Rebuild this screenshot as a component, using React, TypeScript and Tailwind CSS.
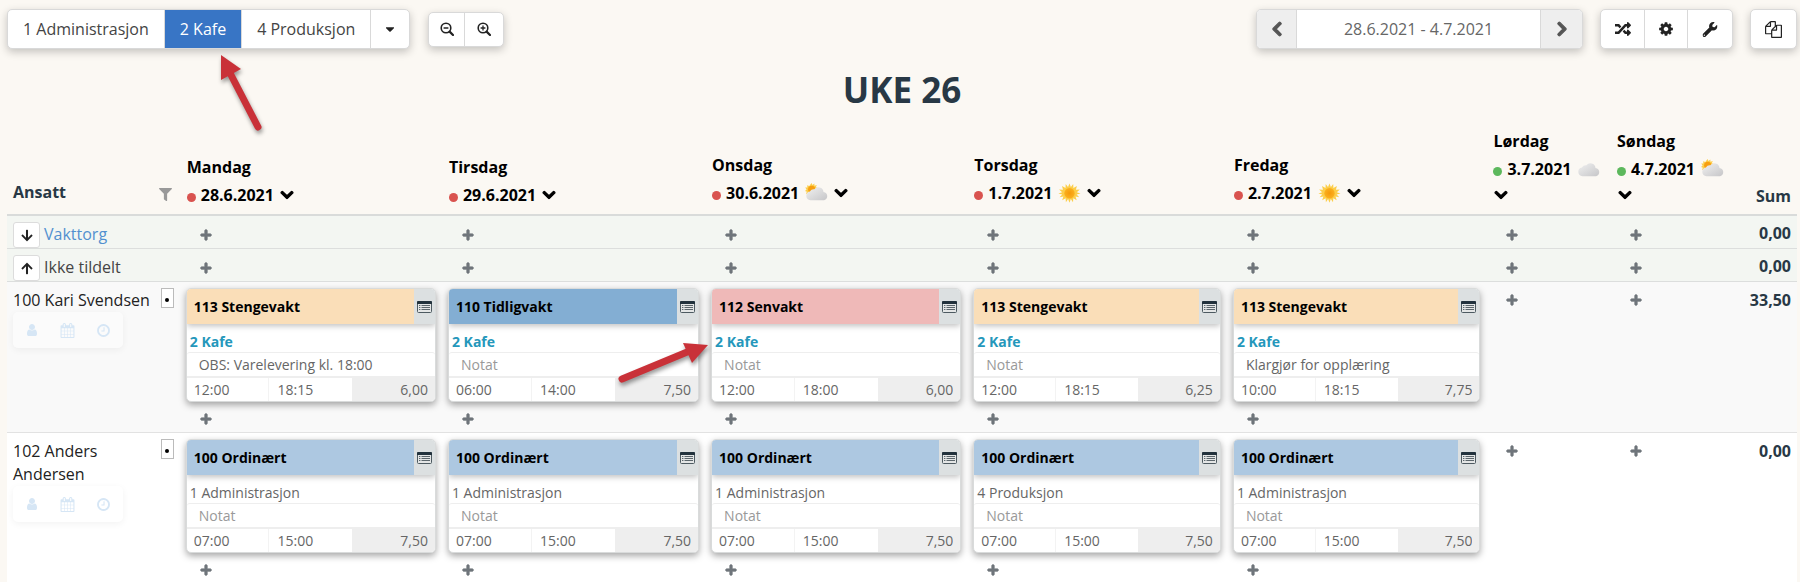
import { ReactNode } from "react";
import { FaCaretDown, FaChevronDown, FaChevronLeft, FaChevronRight, FaFilter, FaPlus, FaRandom, FaWrench, FaArrowDown, FaArrowUp } from "react-icons/fa";

interface Shift {
    title: string;
    color: string;
    dept: string;
    note?: string;
    from: string;
    to: string;
    sum: string;
}

interface Employee {
    name: string;
    sum: string;
    shifts: Shift[];
}

interface Day {
    name: string;
    date: string;
    red: boolean;
    weather?: "sun" | "cloud" | "partly";
    narrow?: boolean;
}

const days: Day[] = [
    { name: "Mandag", date: "28.6.2021", red: true },
    { name: "Tirsdag", date: "29.6.2021", red: true },
    { name: "Onsdag", date: "30.6.2021", red: true, weather: "partly" },
    { name: "Torsdag", date: "1.7.2021", red: true, weather: "sun" },
    { name: "Fredag", date: "2.7.2021", red: true, weather: "sun" },
    { name: "Lørdag", date: "3.7.2021", red: false, weather: "cloud", narrow: true },
    { name: "Søndag", date: "4.7.2021", red: false, weather: "partly", narrow: true },
];

const peach = "bg-[#fadeb8]";
const blue = "bg-[#83aed3]";
const pink = "bg-[#efb9b8]";
const lightBlue = "bg-[#adc8e1]";

const ordinary = (dept: string): Shift => ({ title: "100 Ordinært", color: lightBlue, dept, from: "07:00", to: "15:00", sum: "7,50" });

const employees: Employee[] = [
    {
        name: "100 Kari Svendsen",
        sum: "33,50",
        shifts: [
            { title: "113 Stengevakt", color: peach, dept: "2 Kafe", note: "OBS: Varelevering kl. 18:00", from: "12:00", to: "18:15", sum: "6,00" },
            { title: "110 Tidligvakt", color: blue, dept: "2 Kafe", from: "06:00", to: "14:00", sum: "7,50" },
            { title: "112 Senvakt", color: pink, dept: "2 Kafe", from: "12:00", to: "18:00", sum: "6,00" },
            { title: "113 Stengevakt", color: peach, dept: "2 Kafe", from: "12:00", to: "18:15", sum: "6,25" },
            { title: "113 Stengevakt", color: peach, dept: "2 Kafe", note: "Klargjør for opplæring", from: "10:00", to: "18:15", sum: "7,75" },
        ],
    },
    {
        name: "102 Anders Andersen",
        sum: "0,00",
        shifts: [
            ordinary("1 Administrasjon"),
            ordinary("1 Administrasjon"),
            ordinary("1 Administrasjon"),
            ordinary("4 Produksjon"),
            ordinary("1 Administrasjon"),
        ],
    },
];

const paths = {
    copy: "M1696 384q40 0 68 28t28 68v1216q0 40-28 68t-68 28h-960q-40 0-68-28t-28-68v-288h-544q-40 0-68-28t-28-68v-672q0-40 20-88t48-76l408-408q28-28 76-48t88-20h416q40 0 68 28t28 68v328q68-40 128-40h416zm-544 213l-299 299h299v-299zm-640-384l-299 299h299v-299zm196 647l316-316v-416h-384v416q0 40-28 68t-68 28h-416v640h512v-256q0-40 20-88t48-76zm956 804v-1152h-384v416q0 40-28 68t-68 28h-416v640h896z",
    clock: "M1024 544v448q0 14-9 23t-23 9h-320q-14 0-23-9t-9-23v-64q0-14 9-23t23-9h224v-352q0-14 9-23t23-9h64q14 0 23 9t9 23zm416 352q0-148-73-273t-198-198-273-73-273 73-198 198-73 273 73 273 198 198 273 73 273-73 198-198 73-273zm224 0q0 209-103 385.5t-279.5 279.5-385.5 103-385.5-103-279.5-279.5-103-385.5 103-385.5 279.5-279.5 385.5-103 385.5 103 279.5 279.5 103 385.5z",
    calendar: "M192 1664h288v-288h-288v288zm352 0h320v-288h-320v288zm-352-352h288v-320h-288v320zm352 0h320v-320h-320v320zm-352-384h288v-288h-288v288zm736 736h320v-288h-320v288zm-384-736h320v-288h-320v288zm768 736h288v-288h-288v288zm-384-352h320v-320h-320v320zm-352-864v-288q0-13-9.5-22.5t-22.5-9.5h-64q-13 0-22.5 9.5t-9.5 22.5v288q0 13 9.5 22.5t22.5 9.5h64q13 0 22.5-9.5t9.5-22.5zm736 864h288v-320h-288v320zm-384-384h320v-288h-320v288zm384 0h288v-288h-288v288zm32-480v-288q0-13-9.5-22.5t-22.5-9.5h-64q-13 0-22.5 9.5t-9.5 22.5v288q0 13 9.5 22.5t22.5 9.5h64q13 0 22.5-9.5t9.5-22.5zm384-64v1280q0 52-38 90t-90 38h-1408q-52 0-90-38t-38-90v-1280q0-52 38-90t90-38h128v-96q0-66 47-113t113-47h64q66 0 113 47t47 113v96h384v-96q0-66 47-113t113-47h64q66 0 113 47t47 113v96h128q52 0 90 38t38 90z",
    user: "M1536 1399q0 109-62.5 187t-150.5 78h-854q-88 0-150.5-78t-62.5-187q0-85 8.5-160.5t31.5-152 58.5-131 94-89 134.5-34.5q131 128 313 128t313-128q76 0 134.5 34.5t94 89 58.5 131 31.5 152 8.5 160.5zm-256-887q0 159-112.5 271.5t-271.5 112.5-271.5-112.5-112.5-271.5 112.5-271.5 271.5-112.5 271.5 112.5 112.5 271.5z",
    cog: "M1152 896q0-106-75-181t-181-75-181 75-75 181 75 181 181 75 181-75 75-181zm512-109v222q0 12-8 23t-20 13l-185 28q-19 54-39 91 35 50 107 138 10 12 10 25t-9 23q-27 37-99 108t-94 71q-12 0-26-9l-138-108q-44 23-91 38-16 136-29 186-7 28-36 28h-222q-14 0-24.5-8.5t-11.5-21.5l-28-184q-49-16-90-37l-141 107q-10 9-25 9-14 0-25-11-126-114-165-168-7-10-7-23 0-12 8-23 15-21 51-66.5t54-70.5q-27-50-41-99l-183-27q-13-2-21-12.5t-8-23.5v-222q0-12 8-23t19-13l186-28q14-46 39-92-40-57-107-138-10-12-10-24 0-10 9-23 26-36 98.5-107.5t94.5-71.5q13 0 26 10l138 107q44-23 91-38 16-136 29-186 7-28 36-28h222q14 0 24.5 8.5t11.5 21.5l28 184q49 16 90 37l142-107q9-9 24-9 13 0 25 10 129 119 165 170 7 8 7 22 0 12-8 23-15 21-51 66.5t-54 70.5q26 50 41 98l183 28q13 2 21 12.5t8 23.5z",
};

const Icon = ({ d, className }: { d: string; className: string }) => (
    <svg viewBox="0 0 1792 1792" fill="currentColor" className={className}>
        <path d={d} />
    </svg>
);

const ZoomIcon = ({ plus }: { plus?: boolean }) => (
    <svg viewBox="0 0 14 14" fill="none" stroke="currentColor" className="h-[14px] w-[14px]">
        <circle cx="6" cy="6" r="4.8" strokeWidth="1.6" />
        <path d="M9.6 9.6l3.4 3.4" strokeWidth="2.2" strokeLinecap="round" />
        <path d={plus ? "M3.6 6h4.8M6 3.6v4.8" : "M3.6 6h4.8"} strokeWidth="1.3" />
    </svg>
);

const CardIcon = () => (
    <svg viewBox="0 0 15 12" className="h-3 w-[15px]">
        <rect x="0.5" y="0.5" width="14" height="11" rx="1" fill="#e4e6e6" stroke="#4d5a61" />
        <path d="M0 1q0-1 1-1h13q1 0 1 1v2H0z" fill="#22323d" />
        <path d="M2 4.5h1.4M2 6.5h1.4M2 8.5h1.4M4.5 4.5h8.5M4.5 6.5h8.5M4.5 8.5h8.5" stroke="#5b666c" />
    </svg>
);

const cloudPath = "M5 19.5a4.5 4.5 0 0 1-.6-8.9 4.6 4.6 0 0 1 4.4-2.1 5.2 5.2 0 0 1 9.2 2.6 4.3 4.3 0 0 1 .6 8.4z";

const Weather = ({ kind }: { kind: "sun" | "cloud" | "partly" }) => (
    <svg viewBox="0 0 23 22" className="h-[22px] w-[23px] shrink-0">
        <defs>
            <linearGradient id="cloud" x1="0" y1="0" x2="1" y2="1">
                <stop offset="0" stopColor="#f0f0f0" />
                <stop offset="1" stopColor="#c6c6c8" />
            </linearGradient>
            <radialGradient id="sun">
                <stop offset="0" stopColor="#f59a0a" />
                <stop offset="1" stopColor="#fbb01f" />
            </radialGradient>
        </defs>
        {kind === "sun" && (
            <g>
                <path
                    d="M11.5 1.5l1.4 3.6 2.3-3.1.2 3.9 3.5-1.8-1 3.7 3.9-.2-3 2.6 3.7 1.3-3.9 1 2.7 2.8-3.8-.8 1.2 3.8-3.4-2-.3 3.9-2.2-3.2-1.3 3.7-1.4-3.7-2.2 3.2-.3-3.9-3.4 2 1.2-3.8-3.8.8 2.7-2.8-3.9-1 3.7-1.3-3-2.6 3.9.2-1-3.7 3.5 1.8.2-3.9 2.3 3.1z"
                    fill="#fcce4a"
                />
                <circle cx="11.5" cy="11.2" r="5.2" fill="url(#sun)" />
            </g>
        )}
        {kind === "partly" && (
            <g>
                <path d="M6.5 1l1 2 1.8-1.6.2 2.3 2.3-.6-1 2.1 2 .9-9 6L1 11.7l.9-2L0 9l1.6-1.6L.2 5.6l2.2-.1-.3-2.3 2.2.8z" fill="#fcce4a" />
                <circle cx="6.7" cy="7.3" r="3.6" fill="#f79f10" />
            </g>
        )}
        {kind !== "sun" && (
            <g transform="translate(.5 -1.2)">
                <path d={cloudPath} fill="url(#cloud)" />
            </g>
        )}
    </svg>
);

const Group = ({ children }: { children: ReactNode }) => (
    <div className="flex divide-x divide-[#d9d9d9] overflow-hidden rounded-[5px] border border-[#d9d9d9] bg-white shadow-[0_3px_8px_rgba(0,0,0,0.22)]">
        {children}
    </div>
);

const IconButton = ({ label, size, children }: { label: string; size: string; children: ReactNode }) => (
    <button aria-label={label} className={`flex items-center justify-center text-[#222] ${size}`}>
        {children}
    </button>
);

const Toolbar = () => (
    <div className="flex items-center justify-between text-[#444]">
        <div className="flex items-center gap-[18px]">
            <Group>
                <button className="h-[38px] px-[15px]">1 Administrasjon</button>
                <button className="h-[38px] bg-[#3875c5] px-[15px] text-white">2 Kafe</button>
                <button className="h-[38px] px-[15px]">4 Produksjon</button>
                <IconButton label="Flere avdelinger" size="h-[38px] w-[38px]">
                    <FaCaretDown className="h-3.5" />
                </IconButton>
            </Group>
            <Group>
                <IconButton label="Zoom ut" size="h-[33px] w-9">
                    <ZoomIcon />
                </IconButton>
                <IconButton label="Zoom inn" size="h-[33px] w-[38px]">
                    <ZoomIcon plus />
                </IconButton>
            </Group>
        </div>
        <div className="flex items-center gap-[17px]">
            <Group>
                <button aria-label="Forrige uke" className="flex h-[38px] w-10 items-center justify-center bg-[#eee] text-[#555]">
                    <FaChevronLeft className="h-4" stroke="currentColor" strokeWidth={40} />
                </button>
                <input aria-label="Periode" className="h-[38px] w-[244px] text-center text-[#666]" defaultValue="28.6.2021 - 4.7.2021" />
                <button aria-label="Neste uke" className="flex h-[38px] w-[41px] items-center justify-center bg-[#eee] text-[#555]">
                    <FaChevronRight className="h-4" stroke="currentColor" strokeWidth={40} />
                </button>
            </Group>
            <Group>
                <IconButton label="Bytt" size="h-[38px] w-11">
                    <FaRandom className="h-4 w-4" />
                </IconButton>
                <IconButton label="Innstillinger" size="h-[38px] w-[43px]">
                    <Icon d={paths.cog} className="h-4 w-4" />
                </IconButton>
                <IconButton label="Verktøy" size="h-[38px] w-11">
                    <FaWrench className="h-[15px] -scale-x-100 rotate-90" />
                </IconButton>
            </Group>
            <Group>
                <IconButton label="Kopier" size="h-[38px] w-[45px]">
                    <Icon d={paths.copy} className="h-[17px] w-[17px]" />
                </IconButton>
            </Group>
        </div>
    </div>
);

const DayHeader = ({ day }: { day: Day }) => (
    <th scope="col" className={`px-[7px] text-left align-bottom leading-7 text-black ${day.weather ? "pb-[7px]" : "pb-[5px]"}`}>
        <div>{day.name}</div>
        <div className="flex flex-wrap items-center">
            <span className={`mt-1 mr-[5px] h-[9px] w-[9px] rounded-full ${day.red ? "bg-[#d9534f]" : "bg-[#5cb85c]"}`} />
            <span className="mr-1.5">{day.date}</span>
            {day.weather && <Weather kind={day.weather} />}
            <button aria-label={`Meny for ${day.name}`} className={day.narrow ? "flex h-6 w-full items-center pl-px" : day.weather ? "ml-1.5" : ""}>
                <FaChevronDown className="h-3.5 w-3.5" stroke="currentColor" strokeWidth={45} />
            </button>
        </div>
    </th>
);

const AddButton = ({ day }: { day: string }) => (
    <button aria-label={`Ny vakt ${day}`} className="ml-3.5 flex h-5 w-3 items-center text-[#6f757b]">
        <FaPlus className="h-3 w-3" stroke="currentColor" strokeWidth={40} />
    </button>
);

const ShiftCard = ({ shift }: { shift: Shift }) => (
    <div className="overflow-hidden rounded-[5px] border border-[#d9dbdb] bg-white text-sm text-[#666] shadow-[0_3px_7px_rgba(0,0,0,0.35)]">
        <div className="relative flex h-[35px] items-stretch shadow-[0_2px_6px_rgba(0,0,0,0.25)]">
            <div className={`flex grow items-center px-[7px] font-bold text-black ${shift.color}`}>{shift.title}</div>
            <button aria-label="Vis detaljer" className="flex w-[21px] items-center justify-center bg-[#dce0e1]">
                <CardIcon />
            </button>
        </div>
        <div className={`h-[28px] px-[3px] pt-2 leading-5 ${shift.dept === "2 Kafe" ? "font-bold text-[#2597bb]" : ""}`}>{shift.dept}</div>
        <input
            aria-label="Notat"
            placeholder="Notat"
            defaultValue={shift.note}
            className="block h-6 w-full rounded-[3px] border-t border-[#eee] px-3 placeholder:text-[#999]"
        />
        <div className="grid h-[25px] grid-cols-3 border-t-2 border-[#eee]">
            <input aria-label="Fra" defaultValue={shift.from} className="min-w-0 border-r border-[#f3f3f3] px-[7px]" />
            <input aria-label="Til" defaultValue={shift.to} className="min-w-0 px-2" />
            <input aria-label="Timer" defaultValue={shift.sum} className="min-w-0 bg-[#eee] px-[7px] text-right" />
        </div>
    </div>
);

const GroupRow = ({ label, icon, link }: { label: string; icon: ReactNode; link?: boolean }) => (
    <tr className="h-[33px] border-b border-[#dcdedd] bg-[#f3f6f2]">
        <td className="px-1.5">
            <div className="flex items-center gap-1">
                <button aria-label={`Vis ${label}`} className="mt-1.5 flex h-[26px] w-[27px] items-center justify-center rounded-[3px] border border-[#dcdcdc] bg-white text-[#222]">
                    {icon}
                </button>
                {link ? <a href="#vakttorg" className="pt-1 text-[#5290cf]">{label}</a> : <span className="pt-1 text-[#444]">{label}</span>}
            </div>
        </td>
        {days.map((day) => (
            <td key={day.name} className="px-1.5 pt-1.5">
                <AddButton day={day.name} />
            </td>
        ))}
        <td className="pt-0.5 pr-1.5 text-right font-bold text-[#283845]">0,00</td>
    </tr>
);

const EmployeeRow = ({ employee }: { employee: Employee }) => (
    <tr className="border-b border-[#e2e2e2] align-top odd:bg-[#f9f9f9] even:bg-white">
        <td className="px-1.5 pt-1.5">
            <div className="flex items-start justify-between leading-[23px] text-[#222]">
                <span className="pt-px">{employee.name}</span>
                <button aria-label="Merk" className="flex h-5 w-[13px] shrink-0 items-center justify-center border border-[#bbb] bg-white">
                    <span className="mt-1 h-1 w-1 rounded-full bg-black" />
                </button>
            </div>
            <div className="flex h-9 w-[110px] items-center justify-between rounded-[5px] bg-white/40 px-3 text-[#d6e6f5] shadow-[0_2px_7px_rgba(0,0,0,0.05)]">
                <button aria-label="Profil">
                    <Icon d={paths.user} className="h-3.5 w-3.5" />
                </button>
                <button aria-label="Kalender">
                    <Icon d={paths.calendar} className="h-[15px] w-[15px]" />
                </button>
                <button aria-label="Timer">
                    <Icon d={paths.clock} className="h-[15px] w-[15px]" />
                </button>
            </div>
        </td>
        {days.map((day, i) => (
            <td key={day.name} className={`px-1.5 pb-[3px] ${employee.shifts[i] ? "pt-1.5" : "pt-2"}`}>
                {employee.shifts[i] && (
                    <div className="mb-[7px]">
                        <ShiftCard shift={employee.shifts[i]} />
                    </div>
                )}
                <AddButton day={day.name} />
            </td>
        ))}
        <td className="pt-1.5 pr-1.5 text-right font-bold text-[#283845]">{employee.sum}</td>
    </tr>
);

// red pointer drawn over the schedule, tip at the end of the line
const Pointer = ({ line, head, className }: { line: string; head: string; className: string }) => (
    <svg className={`pointer-events-none absolute h-24 w-24 drop-shadow-[1px_3px_2px_rgba(0,0,0,0.4)] ${className}`} viewBox="0 0 96 96">
        <path d={line} stroke="#c93138" strokeWidth="7" strokeLinecap="round" />
        <path d={head} fill="#c93138" />
    </svg>
);

const App = () => {
    return (
        <div className="relative h-screen overflow-hidden bg-[#fbf8f3] pt-[9px] pr-[3px] pl-[7px] font-['Open_Sans',sans-serif] text-base">
            <Toolbar />
            <h1 className="mt-[15px] text-center text-[35px] leading-[52px] font-bold text-[#283845]">UKE 26</h1>
            <table className="mt-[11px] w-full table-fixed border-collapse">
                <colgroup>
                    <col className="w-[9.65%]" />
                    <col className="w-[14.65%]" />
                    <col className="w-[14.7%]" />
                    <col className="w-[14.65%]" />
                    <col className="w-[14.5%]" />
                    <col className="w-[14.5%]" />
                    <col className="w-[6.9%]" />
                    <col className="w-[6.9%]" />
                    <col />
                </colgroup>
                <thead>
                    <tr className="border-b-2 border-[#d9dbda] text-[#283845]">
                        <th scope="col" className="px-1.5 pb-2 align-bottom leading-7">
                            <div className="flex items-center justify-between">
                                <span>Ansatt</span>
                                <button aria-label="Filtrer" className="mt-1 mr-0.5 text-[#999]">
                                    <FaFilter className="h-[13px] w-[13px]" />
                                </button>
                            </div>
                        </th>
                        {days.map((day) => (
                            <DayHeader key={day.name} day={day} />
                        ))}
                        <th scope="col" className="pr-1.5 pb-1 text-right align-bottom leading-7">
                            Sum
                        </th>
                    </tr>
                </thead>
                <tbody>
                    <GroupRow label="Vakttorg" icon={<FaArrowDown className="h-[13px]" />} link />
                    <GroupRow label="Ikke tildelt" icon={<FaArrowUp className="h-[13px]" />} />
                </tbody>
                <tbody>
                    {employees.map((employee) => (
                        <EmployeeRow key={employee.name} employee={employee} />
                    ))}
                </tbody>
            </table>
            <Pointer className="top-[45px] left-[200px]" line="M58 82L30 28" head="M21 10l20 14-20 11z" />
            <Pointer className="top-[310px] left-[616px]" line="M6 69L76 40" head="M92 35L67 33l9 20z" />
        </div>
    );
};

export default App;
